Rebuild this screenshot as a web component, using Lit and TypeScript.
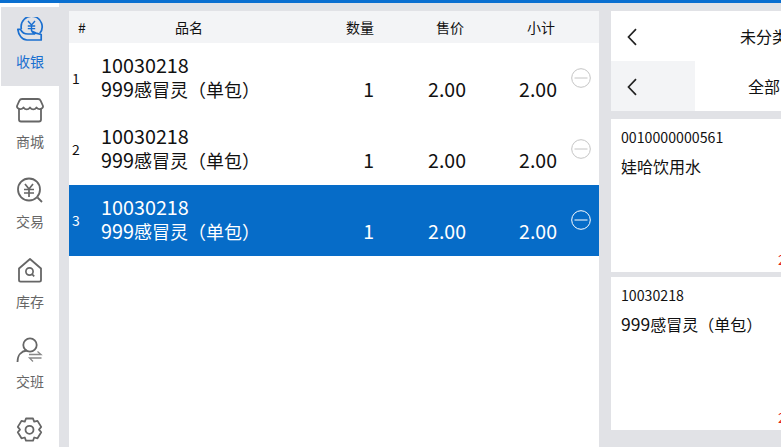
import { LitElement, html, css, svg } from "lit";
import { customElement } from "lit/decorators.js";

const icons: Record<string, any> = {
  pay: svg`<path d="M7.400 12A10.500 10.500 0 1 1 25.800 16.300" fill="none" stroke="#1a6fd0" stroke-width="1.700"/>
    <path d="M14 4l3.500 4 3.500-4M13.800 9h7.400M13.800 11.600h7.400M17.500 8.500v5.500" fill="none" stroke="#1a6fd0" stroke-width="1.400"/>
    <path d="M3.800 12.300h2.700C8 15.500 10.500 17 14 17h6.500l-2.500-2.700 4 1.800 5.200 1.400V23H13C8 23 4.500 18 3.800 12.300z" fill="#e1e2e6" stroke="#1a6fd0" stroke-width="1.700" stroke-linejoin="round"/>`,
  shop: svg`<path d="M5 11v11.500c0 1.200.8 2 2 2h18c1.200 0 2-.8 2-2V11" fill="none" stroke="#666" stroke-width="1.800"/>
    <path d="M8 2h16c1.500 0 2.200.8 2.700 1.800L29 9c.5 2.500-4 4.500-6.500 1.500-1.800 2.500-4.700 2.500-6.500 0-1.800 2.500-4.700 2.500-6.500 0C7 13.500 2.500 11.500 3 9l2.300-5.200C5.800 2.800 6.500 2 8 2z" fill="none" stroke="#666" stroke-width="1.800" stroke-linejoin="round"/>`,
  trade: svg`<circle cx="15" cy="12.500" r="11" fill="none" stroke="#666" stroke-width="1.800"/>
    <path d="M11 7l4 5 4-5M10 12.500h10M10 16h10M15 12v8" fill="none" stroke="#666" stroke-width="1.700"/>
    <path d="M23.500 20.500l4.500 4.500" stroke="#666" stroke-width="1.800"/>`,
  stock: svg`<path d="M5 11.500L16 2l11 9.500V23c0 1-.6 1.600-1.600 1.600H6.600C5.600 24.600 5 24 5 23z" fill="none" stroke="#666" stroke-width="1.800" stroke-linejoin="round"/>
    <circle cx="15.500" cy="14.500" r="3.600" fill="none" stroke="#666" stroke-width="1.700"/><path d="M18 17.200l2.200 2.200" stroke="#666" stroke-width="1.700"/>`,
  shift: svg`<circle cx="16" cy="8" r="6.700" fill="none" stroke="#666" stroke-width="1.800"/>
    <path d="M3.500 25c0-7 4-11 9.500-11.500" fill="none" stroke="#666" stroke-width="1.800"/>
    <path d="M15 17.500h12l-3.500-3M27.500 21H15.500l3.500 3.500" fill="none" stroke="#888" stroke-width="1.300"/>`,
  gear: svg`<path d="M12 1.500h7l1.200 3.200 3.300-.8 3.700 6-2.200 2.700 2.200 2.700-3.700 6-3.300-.8-1.200 3.200h-7l-1.200-3.200-3.300.8-3.700-6 2.200-2.700-2.200-2.700 3.700-6 3.300.8z" fill="none" stroke="#666" stroke-width="1.800" stroke-linejoin="round"/>
    <circle cx="15.500" cy="12.800" r="4" fill="none" stroke="#666" stroke-width="1.800"/>`,
};

const nav = [
  { key: "pay", label: "收银", active: true },
  { key: "shop", label: "商城" },
  { key: "trade", label: "交易" },
  { key: "stock", label: "库存" },
  { key: "shift", label: "交班" },
  { key: "gear", label: "" },
];

const chevron = html`<svg class="chev" width="12" height="18" viewBox="0 0 12 18"><path d="M10 1.200L2.500 9l7.500 7.800" fill="none" stroke="#222" stroke-width="1.700"/></svg>`;

@customElement("app-root")
export class AppRoot extends LitElement {
  static styles = css`
    :host {
      display: block; width: 781px; height: 447px; overflow: hidden;
      font-family: "Noto Sans CJK SC", "Noto Sans", sans-serif; color: #111;
    }
    .page { height: 447px; background: #e1e2e6; border-top: 3px solid #0a6fd0; box-sizing: border-box; display: flex; overflow: hidden; }
    .side { width: 59px; flex: none; background: #fff; padding-top: 4px; margin-right: 10px; }
    .item { height: 80px; box-sizing: border-box; padding: 10px 0 0 1px; display: flex; flex-direction: column; align-items: center; color: #666; font-size: 14px; }
    .item.active { background: #e1e2e6; color: #1a6fd0; height: 79px; margin-left: 1px; margin-bottom: 1px; padding-left: 0; }
    .item svg { display: block; }
    .item span { margin-top: 9px; line-height: 19px; }
    .table { width: 530px; flex: none; margin-top: 8px; background: #fff; }
    .head { height: 32px; background: #f3f4f6; display: grid; grid-template-columns: 26px 225px 80px 100px 82px; align-items: center; text-align: center; font-size: 14px; line-height: 32px; }
    .head .nm { padding-right: 37px; }
    .row { height: 71px; display: grid; grid-template-columns: 26px 239px 40px 92px 91px 42px; font-size: 18px; line-height: 24px; }
    .row.sel { background: #066cc8; color: #fff; }
    .num { font-size: 14px; padding-left: 3px; line-height: 70px; }
    .name { padding: 11px 0 0 6px; white-space: nowrap; }
    .line { height: 24px; line-height: 22px; }
    .d { font-size: 19.800px; }
    .val { text-align: right; align-self: end; padding-bottom: 13px; font-size: 19.500px; }
    .minus { width: 20px; height: 20px; margin: 25px 0 0 14px; }
    .right { width: 400px; flex: none; margin: 8px 0 0 12px; display: flex; flex-direction: column; }
    .bar { height: 50px; background: #fff; display: flex; align-items: center; font-size: 16px; white-space: nowrap; }
    .bar .chev { margin: 2px 0 0 15px; }
    .bar .t1 { margin-left: 102px; }
    .tab { width: 84px; height: 50px; background: #f3f4f6; display: flex; align-items: center; flex: none; }
    .bar .t2 { margin-left: 53px; }
    .card { height: 153px; background: #fff; box-sizing: border-box; margin-top: 8px; padding: 9px 0 0 10px; display: flex; flex-direction: column; }
    .card + .card { margin-top: 5px; }
    .code { font-size: 14.200px; line-height: 18px; }
    .title { font-size: 16px; line-height: 22px; margin-top: 9px; }
    .title .n { font-size: 17.500px; }
    .price { margin-top: auto; margin-left: 157px; margin-bottom: 6px; color: #e2231a; font-size: 14px; line-height: 14px; }
  `;

  private row(n: number, sel = false) {
    const c = sel ? "#fff" : "#c4c4c4";
    return html`<div class="row ${sel ? "sel" : ""}">
      <div class="num">${n}</div>
      <div class="name">
        <div class="line"><span class="d">10030218</span></div>
        <div class="line"><span class="d">999</span>感冒灵（单包）</div>
      </div>
      <div class="val">1</div><div class="val">2.00</div><div class="val">2.00</div>
      <svg class="minus" viewBox="0 0 20 20"><circle cx="10" cy="10" r="9.300" fill="none" stroke="${c}" stroke-width="1"/><path d="M3.500 10h13" stroke="${c}" stroke-width="1"/></svg>
    </div>`;
  }

  render() {
    return html`<div class="page">
      <nav class="side">
        ${nav.map((n) => html`<div class="item ${n.active ? "active" : ""}">
          <svg width="32" height="26" viewBox="0 0 32 26">${icons[n.key]}</svg>
          ${n.label ? html`<span>${n.label}</span>` : ""}
        </div>`)}
      </nav>
      <section class="table">
        <div class="head"><div>#</div><div class="nm">品名</div><div>数量</div><div>售价</div><div>小计</div></div>
        ${this.row(1)}${this.row(2)}${this.row(3, true)}
      </section>
      <section class="right">
        <div class="bar">${chevron}<span class="t1">未分类</span></div>
        <div class="bar"><div class="tab">${chevron}</div><span class="t2">全部</span></div>
        <div class="card"><div class="code">0010000000561</div><div class="title">娃哈饮用水</div><div class="price">2.00</div></div>
        <div class="card"><div class="code">10030218</div><div class="title"><span class="n">999</span>感冒灵（单包）</div><div class="price">2.00</div></div>
      </section>
    </div>`;
  }
}
